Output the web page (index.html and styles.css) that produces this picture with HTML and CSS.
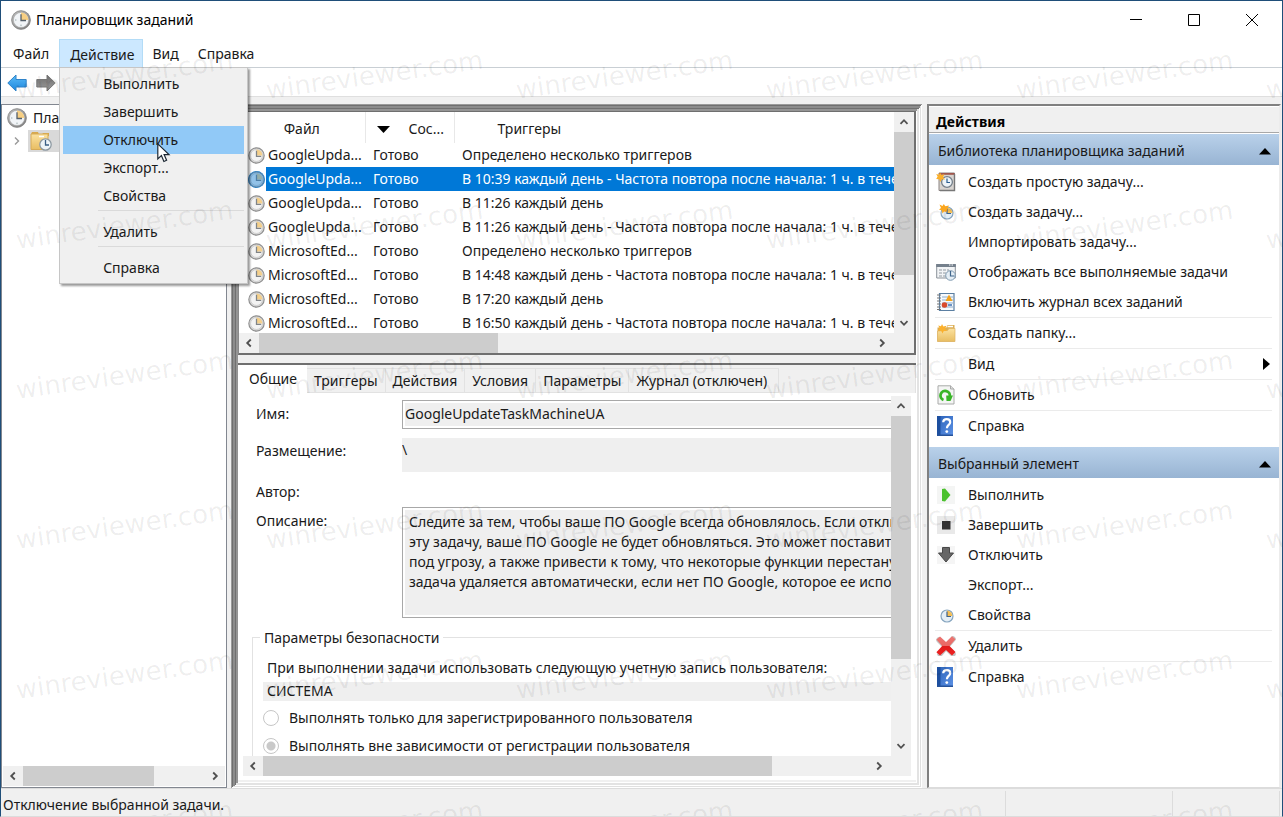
FILE: index.html
```html
<!DOCTYPE html>
<html lang="ru">
<head>
<meta charset="utf-8">
<title>Планировщик заданий</title>
<link rel="stylesheet" href="styles.css">
</head>
<body>
<svg class="sprite" aria-hidden="true">
  <defs>
    <linearGradient id="g-steel" x1="0" y1="0" x2="1" y2="1"><stop offset="0" stop-color="#c4c4c4"/><stop offset="1" stop-color="#777"/></linearGradient>
    <linearGradient id="g-blue" x1="0" y1="0" x2="0" y2="1"><stop offset="0" stop-color="#5bbcf8"/><stop offset="1" stop-color="#1c86dd"/></linearGradient>
    <linearGradient id="g-gray" x1="0" y1="0" x2="0" y2="1"><stop offset="0" stop-color="#6d6d6d"/><stop offset="1" stop-color="#9b9b9b"/></linearGradient>
    <linearGradient id="g-help" x1="0" y1="0" x2="1" y2="1"><stop offset="0" stop-color="#2b62b8"/><stop offset="1" stop-color="#5d92e6"/></linearGradient>
    <linearGradient id="g-folder" x1="0" y1="0" x2="0" y2="1"><stop offset="0" stop-color="#fbe2a0"/><stop offset="1" stop-color="#e8bd62"/></linearGradient>
    <linearGradient id="g-red" x1="0" y1="0" x2="0" y2="1"><stop offset="0" stop-color="#ec7672"/><stop offset=".48" stop-color="#e96864"/><stop offset=".5" stop-color="#e01b1b"/><stop offset="1" stop-color="#e22"/></linearGradient>
  </defs>
  <symbol id="clock" viewBox="0 0 20 20">
    <circle cx="10" cy="10" r="9.6" fill="url(#g-steel)"/><circle cx="10" cy="10" r="9.3" fill="none" stroke="#868686" stroke-width=".8"/>
    <circle cx="10" cy="10" r="7.6" fill="#f1f4f7" stroke="#a7a7a7" stroke-width=".6"/>
    <path d="M10 2.6A7.4 7.4 0 0 1 17.4 10H10z" fill="#f7cf83"/>
    <path d="M10 4.200V10.500H15" fill="none" stroke="#55606b" stroke-width="1.300"/>
    <path d="M10 14.600v1.600M4 10h1.400" stroke="#9aa" stroke-width="1"/>
  </symbol>
  <symbol id="clock-row" viewBox="0 0 20 20">
    <circle cx="10" cy="10" r="9" fill="#dcdcdc" stroke="#8f8f8f" stroke-width="1.400"/>
    <circle cx="10" cy="10" r="7" fill="#f3f3f3" stroke="#c4c4c4" stroke-width=".8"/>
    <path d="M10 3A7 7 0 0 1 17 10H10z" fill="#f4d08c"/>
    <path d="M10 4.500V11H15.500" fill="none" stroke="#808487" stroke-width="1.500"/>
  </symbol>
  <symbol id="clock-small" viewBox="0 0 20 20">
    <circle cx="11" cy="11" r="6" fill="#e4eef6" stroke="#86a5bf" stroke-width="1.200"/>
    <path d="M11 5.600A5.400 5.400 0 0 1 16.400 11H11z" fill="#f5bf55"/>
    <path d="M11 6.500V11.500H15" fill="none" stroke="#3f638a" stroke-width="1.200"/>
  </symbol>
  <symbol id="star" viewBox="0 0 20 20"><path d="M5 0l1.400 2.800L10 2 8 5l2 3-3.400-.4L5 10 3.600 7.200.4 7.600 2 5 .2 2l3.400.8z" fill="#fbb02c"/></symbol>
  <symbol id="task-basic" viewBox="0 0 20 20">
    <path d="M3 1h15.500v17.500H3z" fill="#d8d4d0" stroke="#8c8583"/><path d="M3 1h15.500v1.800H3z" fill="#a0574d"/><path d="M18.500 2v16.500H4" fill="none" stroke="#777" stroke-width="1.400"/>
    <circle cx="11" cy="10" r="5.400" fill="#eef4f8" stroke="#75808b" stroke-width="1.300"/><path d="M11 6.500V10.500H14" fill="none" stroke="#2b5e91" stroke-width="1.200"/>
    <path d="M4 .5l1.300 2.500 3.200-.8L7 5l2 2.500-3.200-.2L4.500 10 3.200 7.300.2 7 1.600 4.600.2 2l2.800.8z" fill="#fbb02c"/>
  </symbol>
  <symbol id="task-new" viewBox="0 0 20 20"><use href="#clock-small" width="20" height="20"/><path d="M3.500 2.500l3 1.500 1.300-2 1.500 2.300 3.700-.8-1.500 2.700L10.500 10 8 9.500 6.500 11.500 5.800 8.500 3 7.500 5 6z" fill="#fba61c"/></symbol>
  <symbol id="running" viewBox="0 0 20 20">
    <path d="M.7 2.500h18.600v13.500H.7z" fill="#f2f4f6" stroke="#8b9299"/><path d="M.2 2h19.600v3H.2z" fill="#75808c"/><path d="M13 3h1.500M15.500 3H17" stroke="#fff"/>
    <path d="M3 8h3m1 0h3m1 0h2M3 11h3m1 0h3M3 14h3m1 0h3" stroke="#929aa2" stroke-width="1.200"/>
    <circle cx="14.500" cy="13.500" r="4.800" fill="#e5eef5" stroke="#7e99b0"/><path d="M14.500 9v5h4" fill="none" stroke="#41668c" stroke-width="1.200"/>
  </symbol>
  <symbol id="journal" viewBox="0 0 20 20">
    <path d="M3.500 1.500h14.500v17H3.500z" fill="#f7fafd" stroke="#5b7fa2" stroke-width="1.200"/><path d="M6 5h11M6 8h11M6 11h11M6 15h11" stroke="#8dadcb"/>
    <path d="M1 3h4M1 6h4M1 9h4M1 12h4M1 15h4M1 17.500h4" stroke="#777" stroke-width="1"/>
    <path d="M13 2.500l3.500 6.500h-7z" fill="#f5a31a"/><circle cx="8.500" cy="13" r="2.800" fill="#d84a2c"/><path d="M12 13h4" stroke="#3d6fb0" stroke-width="1.500"/>
  </symbol>
  <symbol id="folder-new" viewBox="0 0 20 20"><path d="M1.500 4.500h9l1-2.500h7v16.500h-17z" fill="#dcae55"/><path d="M11.500 3.500h5.500" stroke="#fff" stroke-width="1.500"/><path d="M1.500 8l10-.5 1.500-2h6v13h-17.500z" fill="url(#g-folder)" stroke="#dcb263" stroke-width=".7"/><path d="M6 1l1.300 2.500 3.200-.8L9 5.500 11 8l-3.200-.2L6.500 10.500 5.200 7.800l-3 -.3L3.600 5.100 2.200 2.500 5 3.300z" fill="#fbb02c"/></symbol>
  <symbol id="refresh" viewBox="0 0 20 20"><path d="M2 .8h12.500L18 4v15H2z" fill="#f4f5f4" stroke="#a9aaa9"/><path d="M14.500.8V4H18" fill="#ddd" stroke="#a9aaa9"/><path d="M7.500 15A4.700 4.700 0 1 1 13.800 11.500" fill="none" stroke="#39b528" stroke-width="2.800"/><path d="M10.200 10.500h6.800l-2.500 5.500H10.500z" fill="#39b528"/></symbol>
  <symbol id="help" viewBox="0 0 20 20"><path d="M1 0h16v20H1z" fill="url(#g-help)"/><path d="M1 0h3.500v20H1z" fill="#1d4f9f"/><path d="M1 18.500h16V20H1z" fill="#27539a"/><path d="M7.200 6.200c.2-4 7-4 7 0 0 2.700-3.300 2.800-3.300 6" fill="none" stroke="#fff" stroke-width="2.200"/><circle cx="10.800" cy="15.600" r="1.400" fill="#fff"/></symbol>
  <symbol id="play" viewBox="0 0 20 20"><path d="M1 1h18v18H1z" fill="#f4f5f4"/><path d="M6 4l3-.5 5.500 6.500L9 16.500 6 16z" fill="#4cc12f"/></symbol>
  <symbol id="stop" viewBox="0 0 20 20"><path d="M1 1h18v18H1z" fill="#e9e9e9"/><path d="M6 6h8.500v8.500H6z" fill="#333"/></symbol>
  <symbol id="down" viewBox="0 0 20 20"><path d="M1 1h18v18H1z" fill="#f5f5f5"/><path d="M6.500 2.500h7V8h4L10 17 2.500 8h4z" fill="#666" stroke="#484848" stroke-width="1"/></symbol>
  <symbol id="delete" viewBox="0 0 20 20"><path d="M3 4l14 14M17 3L4 18" stroke="#8a8a8a" stroke-width="5.500" stroke-linecap="round" opacity=".5"/><path d="M.5 3.500L4 .5l6 5.500L16 .3l3.500 3L13.500 10l6 6-3.500 3.600L10 14l-6 5.500-3.600-3.300L6.200 10z" fill="url(#g-red)"/></symbol>
  <symbol id="library" viewBox="0 0 22 20"><path d="M1 3h8l1 2h9V2h-6L12 3.500H9L8 1H2z" fill="#d7a94d"/><path d="M1 3h17v15.500H1z" fill="url(#g-folder)" stroke="#d6ab58"/><path d="M9 5.500h5" stroke="#fff" stroke-width="1.500"/><circle cx="15.500" cy="13.500" r="5.700" fill="#edf4f8" stroke="#8a969f" stroke-width="1.200"/><path d="M15.500 9v5H19" fill="none" stroke="#3a5f85" stroke-width="1.300"/></symbol>
  <symbol id="chev-l" viewBox="0 0 10 10"><path d="M6.800 1.500L3.200 5l3.600 3.500" fill="none" stroke="#505050" stroke-width="1.800"/></symbol>
  <symbol id="chev-r" viewBox="0 0 10 10"><path d="M3.200 1.500L6.800 5 3.200 8.500" fill="none" stroke="#505050" stroke-width="1.800"/></symbol>
  <symbol id="chev-u" viewBox="0 0 10 10"><path d="M1.500 6.800L5 3.200l3.500 3.600" fill="none" stroke="#505050" stroke-width="1.800"/></symbol>
  <symbol id="chev-d" viewBox="0 0 10 10"><path d="M1.500 3.200L5 6.800l3.500-3.600" fill="none" stroke="#505050" stroke-width="1.800"/></symbol>
</svg>

<div class="window">
  <header class="titlebar">
    <svg class="icon"><use href="#clock"/></svg>
    <h1 class="title">Планировщик заданий</h1>
    <div class="controls">
      <button class="control" aria-label="Свернуть"><svg width="14" height="14"><path d="M1 6.500h12" stroke="#000"/></svg></button>
      <button class="control" aria-label="Развернуть"><svg width="14" height="14"><path d="M1.500 1.500h11v11h-11z" fill="none" stroke="#000"/></svg></button>
      <button class="control" aria-label="Закрыть"><svg width="14" height="14"><path d="M1 1l12 12M13 1L1 13" stroke="#000"/></svg></button>
    </div>
  </header>

  <nav class="menubar">
    <button class="menu-button">Файл</button>
    <div class="menu-holder">
      <button class="menu-button is-open" aria-expanded="true">Действие</button>
      <div class="dropdown" role="menu">
        <button class="menu-item" role="menuitem">Выполнить</button>
        <button class="menu-item" role="menuitem">Завершить</button>
        <button class="menu-item is-hover" role="menuitem">Отключить</button>
        <button class="menu-item" role="menuitem">Экспорт...</button>
        <button class="menu-item" role="menuitem">Свойства</button>
        <div class="menu-line"></div>
        <button class="menu-item" role="menuitem">Удалить</button>
        <div class="menu-line"></div>
        <button class="menu-item" role="menuitem">Справка</button>
        <svg class="pointer" width="14" height="20" viewBox="0 0 14 20"><path d="M.8.900v15l3.600-3.300 2.500 5.900 2.700-1.200-2.500-5.700h4.900z" fill="#fff" stroke="#1c2733" stroke-width="1.200"/></svg>
      </div>
    </div>
    <button class="menu-button">Вид</button>
    <button class="menu-button">Справка</button>
  </nav>

  <div class="toolbar">
    <button class="tool" aria-label="Назад"><svg width="20" height="18" viewBox="0 0 20 18"><path d="M.8 9L9 1v4.500h10.200v7.500H9V17z" fill="url(#g-blue)" stroke="#2f83c9"/></svg></button>
    <button class="tool" aria-label="Вперёд"><svg width="20" height="18" viewBox="0 0 20 18"><path d="M19.200 9L11 1v4.500H.8v7.500H11V17z" fill="url(#g-gray)" stroke="#777"/></svg></button>
  </div>

  <main class="panes">
    <section class="tree-pane">
      <div class="tree">
        <div class="tree-row"><svg class="icon"><use href="#clock"/></svg><span>Планировщик заданий</span></div>
        <div class="tree-row tree-child"><svg class="tree-arrow" viewBox="0 0 10 10"><path d="M3 1.500L6.500 5 3 8.500" fill="none" stroke="#999" stroke-width="1.400"/></svg><span class="tree-selected"><svg class="icon-library"><use href="#library"/></svg></span></div>
      </div>
      <div class="hbar">
        <button class="bar-button" aria-label="Влево"><svg><use href="#chev-l"/></svg></button>
        <div class="track"><div class="thumb thumb-tree"></div></div>
        <button class="bar-button" aria-label="Вправо"><svg><use href="#chev-r"/></svg></button>
      </div>
    </section>

    <section class="center-pane">
      <div class="task-list">
        <div class="list-row">
          <div class="list-view">
            <table class="tasks">
              <thead><tr><th class="col-name">Файл</th><th class="col-state"><span class="state-head"><svg width="13" height="8"><path d="M0 1h13L6.500 8z"/></svg>Сос...</span></th><th class="col-trigger">Триггеры</th></tr></thead>
              <tbody>
                <tr><td><span class="name"><svg class="icon-row"><use href="#clock-row"/></svg><span>GoogleUpda...</span></span></td><td>Готово</td><td>Определено несколько триггеров</td></tr>
                <tr class="selected"><td><span class="name"><svg class="icon-row"><use href="#clock-row"/></svg><span>GoogleUpda...</span></span></td><td>Готово</td><td>В 10:39 каждый день - Частота повтора после начала: 1 ч. в течение 1 д.</td></tr>
                <tr><td><span class="name"><svg class="icon-row"><use href="#clock-row"/></svg><span>GoogleUpda...</span></span></td><td>Готово</td><td>В 11:26 каждый день</td></tr>
                <tr><td><span class="name"><svg class="icon-row"><use href="#clock-row"/></svg><span>GoogleUpda...</span></span></td><td>Готово</td><td>В 11:26 каждый день - Частота повтора после начала: 1 ч. в течение 1 д.</td></tr>
                <tr><td><span class="name"><svg class="icon-row"><use href="#clock-row"/></svg><span>MicrosoftEd...</span></span></td><td>Готово</td><td>Определено несколько триггеров</td></tr>
                <tr><td><span class="name"><svg class="icon-row"><use href="#clock-row"/></svg><span>MicrosoftEd...</span></span></td><td>Готово</td><td>В 14:48 каждый день - Частота повтора после начала: 1 ч. в течение 1 д.</td></tr>
                <tr><td><span class="name"><svg class="icon-row"><use href="#clock-row"/></svg><span>MicrosoftEd...</span></span></td><td>Готово</td><td>В 17:20 каждый день</td></tr>
                <tr><td><span class="name"><svg class="icon-row"><use href="#clock-row"/></svg><span>MicrosoftEd...</span></span></td><td>Готово</td><td>В 16:50 каждый день - Частота повтора после начала: 1 ч. в течение 1 д.</td></tr>
              </tbody>
            </table>
          </div>
          <div class="vbar">
            <button class="bar-button" aria-label="Вверх"><svg><use href="#chev-u"/></svg></button>
            <div class="track"><div class="thumb thumb-list-v"></div></div>
            <button class="bar-button" aria-label="Вниз"><svg><use href="#chev-d"/></svg></button>
          </div>
        </div>
        <div class="hbar hbar-corner">
          <button class="bar-button" aria-label="Влево"><svg><use href="#chev-l"/></svg></button>
          <div class="track"><div class="thumb thumb-list-h"></div></div>
          <button class="bar-button" aria-label="Вправо"><svg><use href="#chev-r"/></svg></button>
        </div>
      </div>

      <div class="details">
        <div class="tabs" role="tablist">
          <button class="tab is-active" role="tab" aria-selected="true">Общие</button>
          <button class="tab" role="tab">Триггеры</button>
          <button class="tab" role="tab">Действия</button>
          <button class="tab" role="tab">Условия</button>
          <button class="tab" role="tab">Параметры</button>
          <button class="tab tab-last" role="tab">Журнал (отключен)</button>
        </div>
        <div class="tab-body">
          <div class="form-row-view">
            <div class="form-view">
              <form class="form">
                <div class="field field-name"><label for="task-name">Имя:</label><input id="task-name" class="text-box" value="GoogleUpdateTaskMachineUA" readonly></div>
                <div class="field field-place"><label for="place">Размещение:</label><input id="place" class="plain-box" value="\" readonly></div>
                <div class="field field-author"><span>Автор:</span></div>
                <div class="field field-about"><label for="about">Описание:</label><textarea id="about" class="about-box" wrap="off" readonly>Следите за тем, чтобы ваше ПО Google всегда обновлялось. Если отклю
эту задачу, ваше ПО Google не будет обновляться. Это может поставить
под угрозу, а также привести к тому, что некоторые функции перестану
задача удаляется автоматически, если нет ПО Google, которое ее испол</textarea></div>
                <fieldset class="security">
                  <legend>Параметры безопасности</legend>
                  <label class="account-label" for="account">При выполнении задачи использовать следующую учетную запись пользователя:</label>
                  <input id="account" class="account-box" value="СИСТЕМА" readonly>
                  <label class="choice"><input type="radio" name="run" disabled>Выполнять только для зарегистрированного пользователя</label>
                  <label class="choice"><input type="radio" name="run" checked disabled>Выполнять вне зависимости от регистрации пользователя</label>
                </fieldset>
              </form>
            </div>
            <div class="vbar">
              <button class="bar-button" aria-label="Вверх"><svg><use href="#chev-u"/></svg></button>
              <div class="track"><div class="thumb thumb-form-v"></div></div>
              <button class="bar-button" aria-label="Вниз"><svg><use href="#chev-d"/></svg></button>
            </div>
          </div>
          <div class="hbar hbar-form hbar-corner">
            <button class="bar-button" aria-label="Влево"><svg><use href="#chev-l"/></svg></button>
            <div class="track"><div class="thumb thumb-form-h"></div></div>
            <button class="bar-button" aria-label="Вправо"><svg><use href="#chev-r"/></svg></button>
          </div>
        </div>
      </div>
    </section>

    <aside class="actions-pane">
      <h2 class="actions-title">Действия</h2>
      <button class="group-title"><span>Библиотека планировщика заданий</span><svg width="12" height="7"><path d="M0 6.500L6 0l6 6.500z"/></svg></button>
      <div class="group">
        <button class="action"><svg class="icon"><use href="#task-basic"/></svg><span>Создать простую задачу...</span></button>
        <button class="action"><svg class="icon"><use href="#task-new"/></svg><span>Создать задачу...</span></button>
        <button class="action"><span class="icon"></span><span>Импортировать задачу...</span></button>
        <button class="action"><svg class="icon"><use href="#running"/></svg><span>Отображать все выполняемые задачи</span></button>
        <button class="action"><svg class="icon"><use href="#journal"/></svg><span>Включить журнал всех заданий</span></button>
        <div class="rule"></div>
        <button class="action"><svg class="icon"><use href="#folder-new"/></svg><span>Создать папку...</span></button>
        <div class="rule"></div>
        <button class="action"><span class="icon"></span><span>Вид</span><svg class="submenu" width="7" height="12"><path d="M0 0l7 6-7 6z"/></svg></button>
        <div class="rule"></div>
        <button class="action"><svg class="icon"><use href="#refresh"/></svg><span>Обновить</span></button>
        <div class="rule"></div>
        <button class="action"><svg class="icon"><use href="#help"/></svg><span>Справка</span></button>
      </div>
      <button class="group-title"><span>Выбранный элемент</span><svg width="12" height="7"><path d="M0 6.500L6 0l6 6.500z"/></svg></button>
      <div class="group">
        <button class="action"><svg class="icon"><use href="#play"/></svg><span>Выполнить</span></button>
        <button class="action"><svg class="icon"><use href="#stop"/></svg><span>Завершить</span></button>
        <button class="action"><svg class="icon"><use href="#down"/></svg><span>Отключить</span></button>
        <button class="action"><span class="icon"></span><span>Экспорт...</span></button>
        <button class="action"><svg class="icon"><use href="#clock-small"/></svg><span>Свойства</span></button>
        <div class="rule"></div>
        <button class="action"><svg class="icon"><use href="#delete"/></svg><span>Удалить</span></button>
        <div class="rule"></div>
        <button class="action"><svg class="icon"><use href="#help"/></svg><span>Справка</span></button>
      </div>
    </aside>
  </main>

  <footer class="status">
    <span class="status-text">Отключение выбранной задачи.</span>
    <span class="status-cell"></span>
    <span class="status-cell status-end"></span>
  </footer>

  <div class="marks" aria-hidden="true">
    <span>winreviewer.com</span><span>winreviewer.com</span><span>winreviewer.com</span><span>winreviewer.com</span><span>winreviewer.com</span><span>winreviewer.com</span>
    <span>winreviewer.com</span><span>winreviewer.com</span><span>winreviewer.com</span><span>winreviewer.com</span><span>winreviewer.com</span><span>winreviewer.com</span>
    <span>winreviewer.com</span><span>winreviewer.com</span><span>winreviewer.com</span><span>winreviewer.com</span><span>winreviewer.com</span><span>winreviewer.com</span>
    <span>winreviewer.com</span><span>winreviewer.com</span><span>winreviewer.com</span><span>winreviewer.com</span><span>winreviewer.com</span><span>winreviewer.com</span>
    <span>winreviewer.com</span><span>winreviewer.com</span><span>winreviewer.com</span><span>winreviewer.com</span><span>winreviewer.com</span><span>winreviewer.com</span>
    <span>winreviewer.com</span><span>winreviewer.com</span><span>winreviewer.com</span><span>winreviewer.com</span><span>winreviewer.com</span><span>winreviewer.com</span>
  </div>
</div>
</body>
</html>
```
FILE: styles.css
```css
* { box-sizing: border-box; }

body {
  margin: 0;
  font: 14px/20px "Noto Sans", "Open Sans", sans-serif;
  color: #1a1a1a;
  background: #f0f0f0;
}

button, input, textarea { font: inherit; color: inherit; }
button { border: 0; padding: 0; background: none; text-align: left; }
svg { display: block; flex: none; }
.sprite { position: absolute; width: 0; height: 0; }
.icon { width: 20px; height: 20px; flex: none; }

.window {
  position: relative;
  height: 100vh;
  display: flex;
  flex-direction: column;
  overflow: hidden;
  border: 1px solid #1f4e79;
  border-bottom-color: #dcdcdc;
}

/* Title bar and menus */
.titlebar { display: flex; align-items: center; height: 38px; flex: none; padding: 0 1px 0 10px; gap: 5px; background: #fff; }
.title { flex: 1; margin: 0; font-size: 14px; font-weight: 400; color: #000; }
.controls { display: flex; height: 100%; }
.control { width: 58px; display: flex; align-items: center; justify-content: center; }

.menubar { display: flex; height: 29px; flex: none; padding-left: 3px; background: #fff; border-bottom: 1px solid #c9cfd4; }
.menu-button { height: 28px; padding: 1px 10px 0 9px; }
.menu-holder { position: relative; }
.is-open { padding: 2px 8px 0 10px; background: #cce8ff; border: 1px solid #b3dcf7; border-bottom: 0; }
.dropdown {
  position: absolute;
  z-index: 5;
  top: 28px;
  left: 0;
  width: 189px;
  padding: 2px 3px 1px;
  background: #f0f0f0;
  border: 1px solid #c6c6c6;
  box-shadow: 2px 2px 2px rgba(0, 0, 0, .4);
}
.menu-item { display: block; width: 100%; height: 28px; padding-left: 40px; }
.is-hover { background: #91c9f7; }
.menu-line { height: 8px; margin-left: 35px; border-top: 1px solid #dadada; }
.pointer { position: absolute; left: 97px; top: 75px; }

.toolbar { display: flex; align-items: center; gap: 9px; height: 29px; flex: none; padding: 2px 0 0 6px; background: #fff; border-bottom: 1px solid #dfdfdf; }

/* Three panes */
.panes { flex: 1; min-height: 0; display: flex; padding: 7px 1px 0 0; }

.tree-pane { width: 226px; flex: none; display: flex; flex-direction: column; background: #fff; border: 1px solid #828790; padding: 1px; }
.tree { flex: 1; overflow: hidden; }
.tree-row { display: flex; align-items: center; height: 23px; gap: 6px; padding-left: 4px; white-space: nowrap; }
.tree-child { gap: 6px; padding-left: 9px; }
.tree-arrow { width: 10px; height: 10px; }
.tree-selected { flex: 1; padding: 1px 2px; background: #d9d9d9; }
.icon-library { width: 22px; height: 20px; }

/* Scroll bars */
.hbar { display: flex; height: 20px; flex: none; background: #f0f0f0; }
.vbar { display: flex; flex-direction: column; width: 20px; flex: none; background: #f0f0f0; }
.bar-button { width: 20px; height: 20px; flex: none; display: flex; align-items: center; justify-content: center; }
.bar-button svg { width: 10px; height: 10px; }
.track { flex: 1; }
.thumb { background: #cdcdcd; height: 100%; }
.hbar-corner { padding-right: 22px; }
.thumb-tree { width: 72%; }
.thumb-list-v { height: 79%; }
.thumb-list-h { width: 39%; }
.thumb-form-v { height: 76%; }
.thumb-form-h { width: 84%; }

/* Centre pane with its raised frame */
.center-pane {
  flex: 1;
  min-width: 0;
  margin: 0 5px 0 4px;
  display: flex;
  flex-direction: column;
  gap: 8px;
  padding: 7px 6px 8px 7px;
  box-shadow:
    inset 1px 1px #9a9a9a, inset -1px -1px #fff,
    inset 2px 2px #6f6f6f, inset -2px -2px #e0e0e0,
    inset 4px 4px #8c8c8c, inset -3px -3px #fff,
    inset 5px 5px #707070, inset -5px -5px #e3e3e3,
    inset 7px 7px #949494, inset -6px -6px #fff;
}
.task-list { flex: 242 1 0; min-height: 0; display: flex; flex-direction: column; background: #fff; border: 1px solid #6f6f6f; border-width: 1px 2px 2px 1px; border-left-color: #8a8a8a; }
.list-row { flex: 1; min-height: 0; display: flex; }
.list-view { flex: 1; min-width: 0; overflow: hidden; }

.tasks { border-collapse: collapse; table-layout: fixed; width: 800px; white-space: nowrap; }
.tasks th { height: 31px; padding: 3px 0 0; font-weight: 400; text-align: center; border-right: 1px solid #e8e8e8; }
.tasks .col-name { width: 126px; }
.tasks .col-state { width: 89px; }
.tasks .col-trigger { padding-left: 43px; text-align: left; border: 0; }
.state-head { display: flex; align-items: center; gap: 19px; padding-left: 11px; }
.tasks td { height: 24px; padding: 0 0 0 8px; }
.tasks td:first-child { padding-left: 9px; }
.name { display: flex; align-items: center; gap: 1px; }
.name span { padding-left: 2px; line-height: 24px; flex: 1; }
.icon-row { width: 17px; height: 17px; }
.selected { color: #fff; }
.selected td { background: #0078d7; }
.selected td:first-child { background: #fff; }
.selected .name span { background: #0078d7; }
.selected .icon-row { background: #0078d7; border-radius: 50%; }
.selected .icon-row use { opacity: .6; }

.details { flex: 418 1 0; min-height: 0; display: flex; flex-direction: column; border-top: 2px solid #6f6f6f; }
.tabs { display: flex; align-items: flex-end; height: 28px; flex: none; border-right: 1px solid #e2e2e2; }
.tab { height: 25px; padding: 2px 7px 0; border: 1px solid #e2e2e2; border-left: 0; }
.tab-last { padding-right: 11px; }
.tab.is-active { height: 28px; padding: 0 10px 0 11px; margin-right: -3px; background: #fff; border: 0; z-index: 1; }
.tab.is-active + .tab { padding-left: 10px; }
.tab-body { flex: 1; min-height: 0; display: flex; flex-direction: column; padding: 3px 5px 4px; background: #fff; }
.form-row-view { flex: 1; min-height: 0; display: flex; }
.form-view { flex: 1; min-width: 0; overflow: hidden; }

.form { width: 800px; padding: 4px 0 0 13px; }
.field { display: flex; }
.field > :first-child { width: 146px; flex: none; }
.field-name { height: 38px; padding-bottom: 9px; }
.field-name label { padding-top: 4px; }
.text-box { flex: 1; min-width: 0; padding: 0 2px; background: #efefef; border: 1px solid #a8a8a8; outline: 2px solid #fff; outline-offset: -3px; border-radius: 0; }
.field-place { height: 44px; padding-bottom: 10px; }
.field-place label { padding-top: 3px; }
.plain-box { flex: 1; min-width: 0; padding: 0 0 9px; border: 0; background: #efefef; }
.field-author { height: 25px; }
.field-about { height: 111px; }
.field-about label { padding-top: 4px; }
.about-box { flex: 1; min-width: 0; padding: 4px 6px; border: 1px solid #a8a8a8; background: #efefef; resize: none; overflow: hidden; outline: 2px solid #fff; outline-offset: -3px; border-radius: 0; }

.security { display: flex; flex-direction: column; margin: 10px 0 0 -4px; padding: 10px 10px 20px; border: 1px solid #e2e2e2; }
.security legend { padding: 0 4px; margin-left: -3px; }
.account-label { padding-left: 4px; }
.account-box { height: 19px; margin: 4px 0 3px; padding: 0 4px; border: 0; background: #efefef; }
.choice { display: flex; align-items: center; gap: 10px; height: 28px; }
.choice input { appearance: none; width: 16px; height: 16px; margin: 0; border: 1px solid #c6c6c6; border-radius: 50%; background: #fff; }
.choice input:checked { background: radial-gradient(circle, #c9c9c9 4px, #fff 5px); }

/* Actions pane */
.actions-pane { width: 354px; flex: none; background: #fff; border: 2px solid #808080; border-right: 2px solid #ececec; border-bottom: 1px solid #dcdcdc; overflow: hidden; }
.actions-title { margin: 1px 0 1px; height: 26px; padding: 5px 7px 0; font-size: 14px; line-height: 20px; color: #000; background: #f0f0f0; border-bottom: 1px solid #a8a8a8; }
.group-title { display: flex; width: 100%; height: 31px; align-items: center; justify-content: space-between; padding: 3px 8px 0 9px; background: linear-gradient(#b9d1ea, #98b4d3); }
.group { padding: 2px 0 6px; }
.action { display: flex; align-items: center; width: 100%; height: 30px; gap: 12px; padding: 0 9px 0 7px; }
.submenu { margin-left: auto; }
.rule { height: 1px; margin: 0 7px 0 6px; background: #ebebeb; }

/* Status bar */
.status { display: flex; align-items: stretch; height: 28px; flex: none; border-top: 1px solid #dcdcdc; padding: 2px 2px 0; }
.status-text { flex: 1; padding-top: 4px; }
.status-cell { width: 167px; border-left: 1px solid #dcdcdc; }
.status-end { width: 108px; border-right: 1px solid #dcdcdc; }

/* Watermark laid over the whole window */
.marks {
  position: absolute;
  z-index: 9;
  inset: 0;
  display: grid;
  grid-template-columns: repeat(6, 250px);
  grid-auto-rows: 150px;
  padding: 74px 0 0 17px;
  overflow: hidden;
  pointer-events: none;
  font: 26px/30px "DejaVu Sans", sans-serif;
  color: rgba(0, 0, 0, .07);
}
.marks span { transform: rotate(-8deg); transform-origin: 0 100%; height: 30px; white-space: nowrap; }
```
